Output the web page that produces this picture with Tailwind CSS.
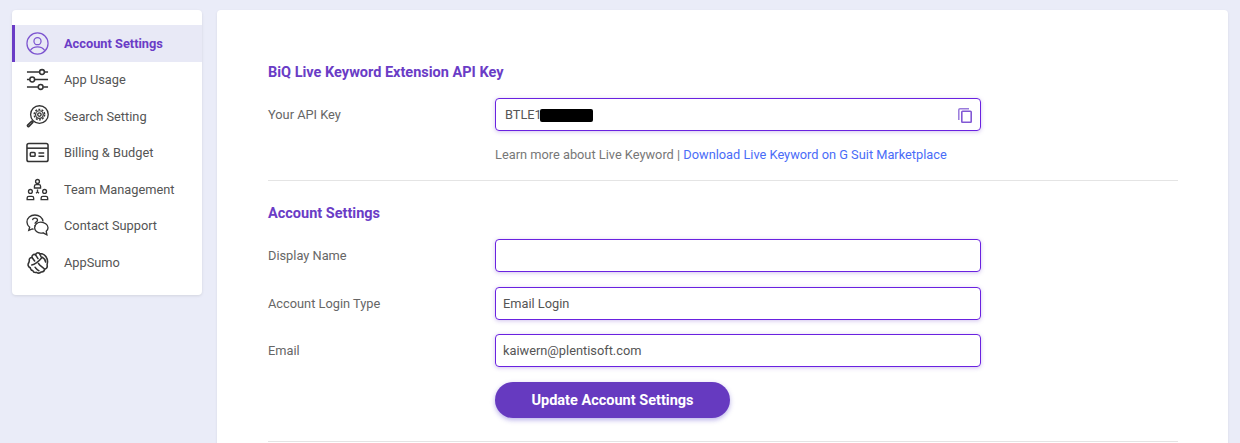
<!DOCTYPE html>
<html lang="en">
<head>
    <meta charset="UTF-8">
    <meta name="viewport" content="width=device-width, initial-scale=1.0">
    <script src="https://cdn.jsdelivr.net/npm/@tailwindcss/browser@4"></script>
    <title>Account Settings</title>
</head>
<body class="h-[443px] overflow-hidden bg-[#eaecf8] font-['Roboto',sans-serif] text-[12.8px] text-[#555]">
  <div class="flex items-start gap-[15px] pl-3 pt-[10px]">

    <!-- sidebar -->
    <nav class="h-[285px] w-[190px] shrink-0 rounded-[4px] bg-white pt-[15px] shadow-[0_1px_3px_rgba(0,0,0,0.1)]">
      <a class="flex h-[36.5px] items-center gap-[15px] border-l-[3px] border-[#6a3cc6] bg-[#e8e9f6] pl-[11px] font-bold text-[#6a3cc6]">
        <svg class="h-[23px] w-[23px]" viewBox="0 0 24 24" fill="none" stroke="#7d55d0" stroke-width="1.3"><circle cx="12" cy="12" r="11"/><circle cx="12" cy="9.600" r="3.700"/><path d="M4.400 19.400c1.800-2.800 4.400-3.800 7.600-3.800s5.800 1 7.600 3.800"/></svg>
        Account Settings
      </a>
      <a class="flex h-[36.5px] items-center gap-[15px] pl-[14px]">
        <svg class="h-[23px] w-[23px]" viewBox="0 0 24 24" fill="none" stroke="#333" stroke-width="1.600"><path d="M1 4.200h13M19.500 4.200h3.500M1 12h3M9 12h14M1 19.800h12M18 19.800h5"/><circle cx="16.700" cy="4.200" r="2.500"/><circle cx="6.500" cy="12" r="2.500"/><circle cx="15.300" cy="19.800" r="2.500"/></svg>
        App Usage
      </a>
      <a class="flex h-[36.5px] items-center gap-[15px] pl-[14px]">
        <svg class="h-[23px] w-[23px]" viewBox="0 0 24 24" fill="none" stroke="#333" stroke-width="1.400"><circle cx="14" cy="10" r="9.200"/><circle cx="14" cy="10" r="1.800"/><circle cx="14" cy="10" r="4" stroke-width="1.300"/><circle cx="14" cy="10" r="5.500" stroke-width="1.400" stroke-dasharray="2 1.450"/><path d="M7.400 16.600l-1.400 1.400"/><path d="M5.800 17l1.300 1.300-4 4c-.5.5-1 .5-1.400 0s-.4-.9 0-1.300z" stroke-width="1.600"/></svg>
        Search Setting
      </a>
      <a class="flex h-[36.5px] items-center gap-[15px] pl-[14px]">
        <svg class="h-[23px] w-[23px]" viewBox="0 0 24 24" fill="none" stroke="#333" stroke-width="1.600"><rect x="1" y="2.500" width="22" height="19" rx="2"/><path d="M1 7.500h22"/><rect x="4.500" y="12" width="5" height="4" rx="1"/><path d="M13 12.500h6M13 16h6"/></svg>
        Billing &amp; Budget
      </a>
      <a class="flex h-[36.5px] items-center gap-[15px] pl-[14px]">
        <svg class="h-[23px] w-[23px]" viewBox="0 0 24 24" fill="none" stroke="#333" stroke-width="1.400"><circle cx="12" cy="3.600" r="2"/><path d="M8.800 10.400V8.600c0-1 .8-1.700 1.700-1.700h3c.9 0 1.700.7 1.700 1.700v1.800z"/><path d="M12 12v2.500M12 14.500l-1.500 1.500M12 14.500l1.500 1.500"/><circle cx="4.600" cy="14" r="2"/><path d="M1.200 22.600v-1.800c0-1 .8-1.700 1.700-1.700h3.400c.9 0 1.700.7 1.700 1.700v1.800z"/><circle cx="19.400" cy="14" r="2"/><path d="M15.800 22.600v-1.800c0-1 .8-1.700 1.700-1.700h3.400c.9 0 1.700.7 1.700 1.700v1.800z"/></svg>
        Team Management
      </a>
      <a class="flex h-[36.5px] items-center gap-[15px] pl-[14px]">
        <svg class="h-[23px] w-[23px]" viewBox="0 0 24 24" fill="none" stroke="#333" stroke-width="1.400"><path d="M8 15.800c-.5 0-1-.1-1.500-.3L2.900 17l.9-3.200C2.100 12.400 1 10.500 1 8.300 1 4.300 4.600 1 9.300 1c4.400 0 8 2.900 8.500 6.800"/><path d="M15.500 8.500c-3.600 0-6.500 2.700-6.500 5.800 0 3.200 2.900 5.700 6.500 5.700.8 0 1.600-.1 2.300-.4l4 2.100-.7-3.700c1.100-1 1.900-2.300 1.900-3.700 0-3.100-3.900-5.800-7.500-5.800z"/><path d="M6.800 6.300c.2-1.300 1.200-2 2.600-2 1.500 0 2.600.8 2.600 2.100 0 1.800-2.600 1.900-2.600 3.900"/><path d="M9.400 11.800v1.300" stroke-width="1.600"/></svg>
        Contact Support
      </a>
      <a class="flex h-[36.5px] items-center gap-[15px] pl-[14px]">
        <svg class="h-[23px] w-[23px]" viewBox="0 0 24 24" fill="none" stroke="#333" stroke-width="1.600" stroke-linejoin="round" stroke-linecap="round"><path d="M4.500 17.500C2 16.500 1.500 14 3 12l.5-2a2.400 2.400 0 0 1 3-3 2.400 2.400 0 0 1 3.500-3 2.400 2.400 0 0 1 4-1.500l3 .5c3 1 5.500 4.500 5.500 8 0 1.500-.5 2.500-.5 3.500.5 2-.5 4-2.500 4.500-.5 2-2 3-3.500 2.800-1.500 1.500-3.500 1.500-5 .5-2 .5-3.500-.5-4-2-1 0-2-.7-2.500-2.300z"/><path d="M6.500 7l2.500 3.500M10 4l2.500 4M14 2.500l2 4M6 14.500c4-.5 8-4.500 11-8 2 1 3 3 3.500 5M13 13c1 2 3 3 6 5.500M9.500 17c1 1 2 3 4 3.500"/></svg>
        AppSumo
      </a>
    </nav>

    <!-- main card -->
    <main class="h-[460px] w-[1011px] rounded-[4px] bg-white pt-[54px] pr-[50px] pl-[51px] shadow-[0_1px_3px_rgba(0,0,0,0.08)]">
      <h2 class="h-[18px] text-[14.5px] leading-[18px] font-bold text-[#6a3cc6]">BiQ Live Keyword Extension API Key</h2>

      <div class="mt-[16px] grid grid-cols-[227px_486px] items-start">
        <label class="mt-[9px] leading-[16px] text-[#666]">Your API Key</label>
        <div class="relative flex h-[33px] items-center rounded-[4px] border border-[#6a22e0] pt-[1px] pl-[9px] shadow-[0_1px_4px_rgba(106,60,198,0.3)]">
          <span>BTLE1</span>
          <span class="ml-[-2px] h-[13px] w-[53px] rounded-[2px] bg-black"></span>
          <svg class="absolute top-[9px] right-[8px] h-[15px] w-[14px]" viewBox="0 0 14 15" fill="none"><path d="M11 .8H2A1.200 1.200 0 0 0 .8 2v10" stroke="#9a7bdc" stroke-width="1.500"/><rect x="3.800" y="3.300" width="9.400" height="11" rx=".8" stroke="#8258d4" stroke-width="1.600"/></svg>
        </div>
      </div>
      <p class="mt-[16px] ml-[227px] h-[16px] leading-[16px] text-[#777]">Learn more about Live Keyword | <a class="text-[#4a6cf7]">Download Live Keyword on G Suit Marketplace</a></p>

      <hr class="mt-[17px] border-[#e4e4e4]">

      <h2 class="mt-[24px] h-[18px] text-[14.5px] leading-[18px] font-bold text-[#6a3cc6]">Account Settings</h2>

      <div class="mt-[16px] grid grid-cols-[227px_486px] items-start gap-y-[14.5px]">
        <label class="mt-[9px] leading-[16px] text-[#666]">Display Name</label>
        <input class="h-[33px] rounded-[4px] border border-[#6a22e0] px-[7px] shadow-[0_1px_4px_rgba(106,60,198,0.3)]" value="">
        <label class="mt-[9px] leading-[16px] text-[#666]">Account Login Type</label>
        <input class="h-[33px] rounded-[4px] border border-[#6a22e0] px-[7px] text-[#555] shadow-[0_1px_4px_rgba(106,60,198,0.3)]" value="Email Login">
        <label class="mt-[9px] leading-[16px] text-[#666]">Email</label>
        <input class="h-[33px] rounded-[4px] border border-[#6a22e0] px-[7px] text-[#555] shadow-[0_1px_4px_rgba(106,60,198,0.3)]" value="kaiwern@plentisoft.com">
      </div>

      <button class="mt-[15px] ml-[227px] block h-[36px] w-[235px] rounded-full bg-[#663ac0] pt-[1px] text-[14.5px] font-bold text-white shadow-[0_2px_5px_rgba(80,60,200,0.4)]">Update Account Settings</button>

      <hr class="mt-[23px] border-[#e4e4e4]">
    </main>
  </div>
</body>
</html>
